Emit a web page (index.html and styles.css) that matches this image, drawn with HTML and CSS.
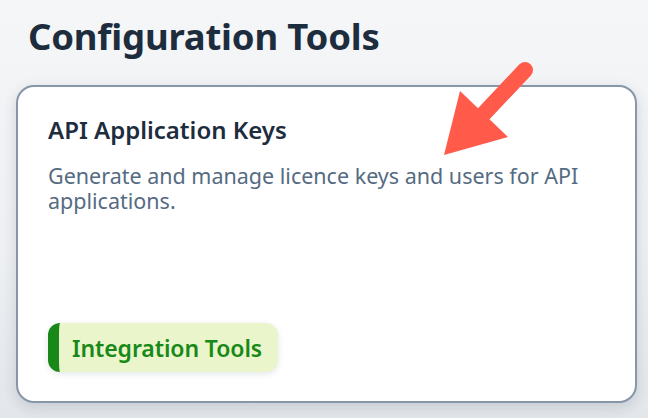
FILE: index.html
```html
<!DOCTYPE html>
<html lang="en">
<head>
<meta charset="utf-8">
<title>Configuration Tools</title>
<link rel="stylesheet" href="styles.css">
</head>
<body>
<main class="page">
  <h1 class="section-title">Configuration Tools</h1>
  <article class="tile">
    <h2 class="tile-title">API Application Keys</h2>
    <p class="tile-desc">Generate and manage licence keys and users for API applications.</p>
    <span class="tag">Integration Tools</span>
  </article>
  <svg class="pointer" width="648" height="418" viewBox="0 0 648 418" aria-hidden="true">
    <line x1="525" y1="70" x2="476" y2="122" stroke="#ff5a4a" stroke-width="16" stroke-linecap="round"/>
    <polygon points="444,155 460,91 508,137" fill="#ff5a4a"/>
  </svg>
</main>
</body>
</html>
```

FILE: styles.css
```css
html, body {
  margin: 0;
  height: 100%;
}

body {
  background: linear-gradient(180deg, #f5f6f7 0%, #eef0f3 60%, #e3e6ea 100%);
  font-family: "Noto Sans", "Open Sans", sans-serif;
}

.page {
  position: relative;
  width: 648px;
  height: 418px;
  box-sizing: border-box;
  padding: 12px 11px 0 16px;
  overflow: hidden;
}

.section-title {
  margin: 0 0 25px 12px;
  font-size: 36.5px;
  line-height: 48px;
  font-weight: 700;
  color: #1d2d3e;
  letter-spacing: -0.2px;
}

.tile {
  display: flex;
  flex-direction: column;
  align-items: flex-start;
  box-sizing: border-box;
  width: 621px;
  height: 318px;
  padding: 28px 30px 29px 30px;
  background: #ffffff;
  border: 2px solid #8796a8;
  border-radius: 18px;
  box-shadow: 0 4px 14px rgba(34, 54, 73, 0.16);
}

.tile-title {
  margin: 0 0 18px 0;
  font-size: 24px;
  line-height: 30px;
  font-weight: 600;
  color: #1d2d3e;
}

.tile-desc {
  margin: 0;
  font-size: 21.5px;
  line-height: 25px;
  color: #556b82;
}

.tag {
  margin-top: auto;
  display: flex;
  align-items: center;
  box-sizing: border-box;
  height: 49px;
  padding: 0 16px 0 13px;
  background: #ebf5cb;
  border-left: 11px solid #188918;
  border-radius: 12px;
  color: #188918;
  font-size: 23px;
  font-weight: 600;
  letter-spacing: -0.1px;
  box-shadow: 0 2px 6px rgba(34, 54, 73, 0.12);
}

.pointer {
  position: absolute;
  left: 0;
  top: 0;
  pointer-events: none;
}
```
